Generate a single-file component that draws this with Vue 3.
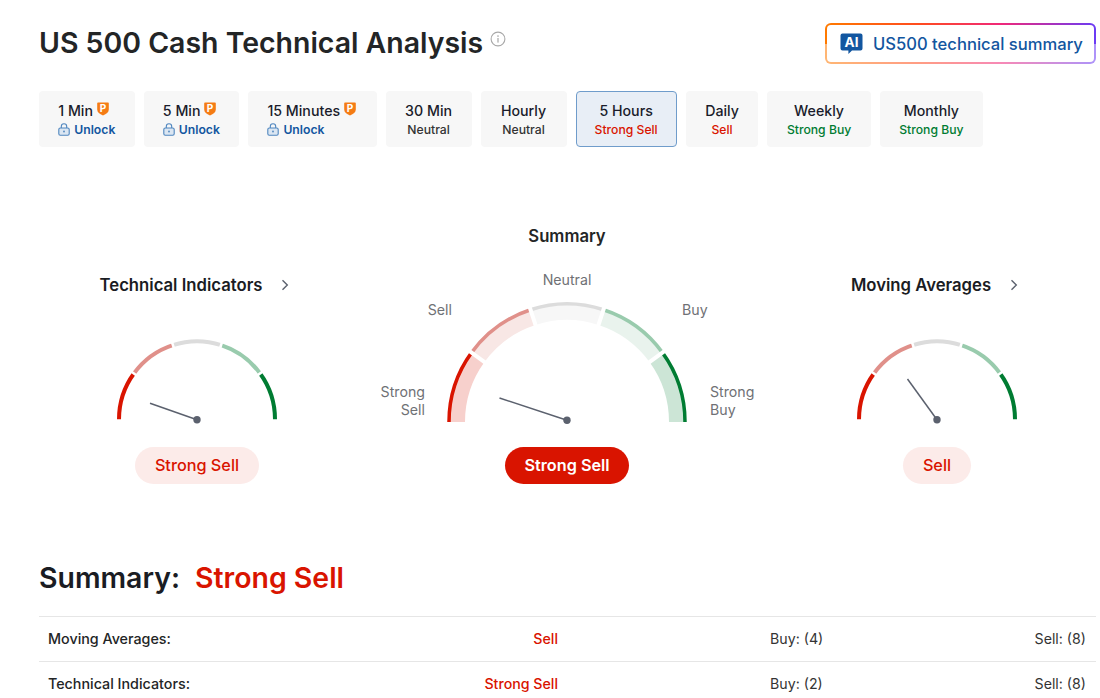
<script setup>
const tabs = [
  { label: '1 Min', locked: true },
  { label: '5 Min', locked: true },
  { label: '15 Minutes', locked: true },
  { label: '30 Min', sub: 'Neutral', tone: 'neutral' },
  { label: 'Hourly', sub: 'Neutral', tone: 'neutral' },
  { label: '5 Hours', sub: 'Strong Sell', tone: 'sell', active: true },
  { label: 'Daily', sub: 'Sell', tone: 'sell' },
  { label: 'Weekly', sub: 'Strong Buy', tone: 'buy' },
  { label: 'Monthly', sub: 'Strong Buy', tone: 'buy' }
]

const strong = ['#d91400', '#e0908a', '#dcdcdc', '#99cbad', '#007c32']
const light = ['#f7d0cc', '#f8e7e5', '#f7f7f7', '#e9f3ed', '#cce5d6']

function pt(cx, cy, r, deg) {
  const a = (deg * Math.PI) / 180
  return [cx - r * Math.cos(a), cy - r * Math.sin(a)]
}
function arc(cx, cy, r, from, to) {
  const [x1, y1] = pt(cx, cy, r, from)
  const [x2, y2] = pt(cx, cy, r, to)
  return `M${x1.toFixed(2)} ${y1.toFixed(2)}A${r} ${r} 0 0 1 ${x2.toFixed(2)} ${y2.toFixed(2)}`
}
const seps = [36, 72, 108, 144]
function radial(cx, cy, r0, r1, deg) {
  const [x1, y1] = pt(cx, cy, r0, deg)
  const [x2, y2] = pt(cx, cy, r1, deg)
  return { x1, y1, x2, y2 }
}
const segIdx = [0, 1, 2, 3, 4]

// small gauge: viewBox 170x90, centre at (85, 84.3)
const smallArcs = segIdx.map((i) => arc(85, 84.3, 78, i * 36, (i + 1) * 36))
const smallSeps = seps.map((d) => radial(85, 84.3, 70, 86, d))
const gaugeTech = { x: 38, y: 68.3 }
const gaugeMa = { x: 55.5, y: 44 }

// big gauge: viewBox 424x156, centre at (212, 152)
const bigOuter = segIdx.map((i) => arc(212, 152, 118, i * 36, (i + 1) * 36))
const bigBand = segIdx.map((i) => arc(212, 152, 110, i * 36, (i + 1) * 36))
const bigSeps = seps.map((d) => radial(212, 152, 96, 126, d))

const rows = [
  { name: 'Moving Averages:', sig: 'Sell', buy: 'Buy: (4)', sell: 'Sell: (8)' },
  { name: 'Technical Indicators:', sig: 'Strong Sell', buy: 'Buy: (2)', sell: 'Sell: (8)' }
]
</script>

<template>
  <div class="page">
    <header class="head">
      <div class="title-wrap">
        <h1>US 500 Cash Technical Analysis</h1>
        <svg class="info" width="16" height="16" viewBox="0 0 16 16" fill="none">
          <circle cx="8" cy="8" r="6.9" stroke="#a8a8a8" stroke-width="1.1" />
          <rect x="7.4" y="7" width="1.2" height="4.6" fill="#a8a8a8" />
          <circle cx="8" cy="5" r="0.85" fill="#a8a8a8" />
        </svg>
      </div>
      <button class="ai">
        <svg width="23" height="22" viewBox="0 0 23 22">
          <path d="M2.5 0.5h18a2 2 0 0 1 2 2v13a2 2 0 0 1-2 2h-8.5l-3.6 3.6v-3.6h-5.900a2 2 0 0 1-2-2v-13a2 2 0 0 1 2-2z" fill="#1256a0" />
          <text x="11.5" y="14" text-anchor="middle" class="ai-text">AI</text>
        </svg>
        <span>US500 technical summary</span>
      </button>
    </header>

    <nav class="tabs">
      <div v-for="t in tabs" :key="t.label" class="tab" :class="{ active: t.active, locked: t.locked }">
        <div class="tab-label">
          {{ t.label }}
          <svg v-if="t.locked" class="pro" width="12" height="14" viewBox="0 0 12 14">
            <path d="M1 0.5h10a.8.8 0 0 1 .8.8v6.2c0 2.8-2.4 4.600-5.800 6-3.400-1.400-5.800-3.200-5.800-6v-6.200a.8.8 0 0 1 .8-.8z" fill="#f57c14" />
            <text x="6" y="9.600" text-anchor="middle" class="pro-text">P</text>
          </svg>
        </div>
        <div v-if="t.locked" class="tab-sub unlock">
          <svg width="12" height="13" viewBox="0 0 12 13" fill="none">
            <rect x="0.8" y="5" width="10.400" height="7.200" rx="1.500" fill="#dbe6f2" stroke="#4f86bf" stroke-width="1.100" />
            <path d="M3.300 5V3.400a2.700 2.700 0 0 1 5.400 0V5" stroke="#4f86bf" stroke-width="1.100" />
            <circle cx="6" cy="8.500" r="0.900" fill="#4f86bf" />
          </svg>
          Unlock
        </div>
        <div v-else class="tab-sub" :class="t.tone">{{ t.sub }}</div>
      </div>
    </nav>

    <section class="gauges">
      <div class="gauge side">
        <div class="g-title">Technical Indicators
          <svg width="8" height="12" viewBox="0 0 8 12" fill="none"><path d="M1.500 1.200 6.300 6l-4.800 4.800" stroke="#5b616e" stroke-width="1.400" /></svg>
        </div>
        <svg class="small" width="170" height="90" viewBox="0 0 170 90">
          <path v-for="(d, i) in smallArcs" :key="i" :d="d" fill="none" :stroke="strong[i]" stroke-width="4" />
          <line v-for="(s, i) in smallSeps" :key="'s' + i" v-bind="s" stroke="#fff" stroke-width="2.500" />
          <line x1="85" y1="84.800" :x2="gaugeTech.x" :y2="gaugeTech.y" stroke="#5b616e" stroke-width="1.500" />
          <circle cx="85" cy="84.800" r="3.700" fill="#5b616e" />
        </svg>
        <div class="pill soft">Strong Sell</div>
      </div>

      <div class="gauge center">
        <div class="g-title big-title">Summary</div>
        <svg class="big" width="424" height="156" viewBox="0 0 424 156">
          <path v-for="(d, i) in bigBand" :key="'b' + i" :d="d" fill="none" :stroke="light[i]" stroke-width="16" />
          <path v-for="(d, i) in bigOuter" :key="'o' + i" :d="d" fill="none" :stroke="strong[i]" stroke-width="3.500" />
          <line v-for="(s, i) in bigSeps" :key="'l' + i" v-bind="s" stroke="#fff" stroke-width="4" />
          <line x1="212" y1="150.300" x2="144.500" y2="128" stroke="#5b616e" stroke-width="1.500" />
          <circle cx="212" cy="150.300" r="3.700" fill="#5b616e" />
          <text class="lbl" x="212" y="15" text-anchor="middle">Neutral</text>
          <text class="lbl" x="97" y="45" text-anchor="end">Sell</text>
          <text class="lbl" x="327" y="45">Buy</text>
          <text class="lbl" x="70" y="127" text-anchor="end">Strong</text>
          <text class="lbl" x="70" y="145" text-anchor="end">Sell</text>
          <text class="lbl" x="355" y="127">Strong</text>
          <text class="lbl" x="355" y="145">Buy</text>
        </svg>
        <div class="pill solid">Strong Sell</div>
      </div>

      <div class="gauge side">
        <div class="g-title">Moving Averages
          <svg width="8" height="12" viewBox="0 0 8 12" fill="none"><path d="M1.500 1.200 6.300 6l-4.800 4.800" stroke="#5b616e" stroke-width="1.400" /></svg>
        </div>
        <svg class="small" width="170" height="90" viewBox="0 0 170 90">
          <path v-for="(d, i) in smallArcs" :key="i" :d="d" fill="none" :stroke="strong[i]" stroke-width="4" />
          <line v-for="(s, i) in smallSeps" :key="'s' + i" v-bind="s" stroke="#fff" stroke-width="2.500" />
          <line x1="85" y1="84.800" :x2="gaugeMa.x" :y2="gaugeMa.y" stroke="#5b616e" stroke-width="1.500" />
          <circle cx="85" cy="84.800" r="3.700" fill="#5b616e" />
        </svg>
        <div class="pill soft">Sell</div>
      </div>
    </section>

    <h2 class="sum-head">Summary:<span>Strong Sell</span></h2>

    <div class="table">
      <div v-for="r in rows" :key="r.name" class="row">
        <span class="r-name">{{ r.name }}</span>
        <span class="r-sig">{{ r.sig }}</span>
        <span class="r-buy">{{ r.buy }}</span>
        <span class="r-sell">{{ r.sell }}</span>
      </div>
    </div>
  </div>
</template>

<style>
html, body { margin: 0; background: #fff; overflow: hidden; }
</style>

<style scoped>
.page {
  width: 1100px;
  height: 698px;
  overflow: hidden;
  box-sizing: border-box;
  padding: 23px 4px 0 39px;
  font-family: Inter, "Liberation Sans", sans-serif;
  color: #1a1c23;
  background: #fff;
}
.head {
  display: flex;
  justify-content: space-between;
  align-items: flex-start;
  height: 41px;
}
.title-wrap {
  display: flex;
  align-items: flex-start;
  gap: 7px;
}
h1 {
  margin: 1px 0 0;
  font-size: 28.45px;
  line-height: 38px;
  font-weight: 600;
  color: #232526;
}
.info { margin-top: 8px; }
.ai {
  box-sizing: border-box;
  width: 271px;
  height: 41px;
  display: flex;
  align-items: center;
  gap: 10px;
  padding: 0 0 0 13px;
  border: 2px solid transparent;
  border-radius: 6px;
  background:
    linear-gradient(#fff, #fff) padding-box,
    linear-gradient(to bottom, transparent 50%, rgba(255, 255, 255, 0.45) 50%) border-box,
    linear-gradient(90deg, #ff7a00 0%, #ff4b1f 35%, #f0287a 65%, #6a3bf5 100%) border-box;
  font-family: inherit;
  font-size: 16.6px;
  font-weight: 500;
  color: #1256a0;
}
.ai svg { flex: none; }
.ai-text { font: 700 13.5px Inter, sans-serif; fill: #fff; }

.tabs {
  display: flex;
  gap: 9px;
  margin-top: 27px;
}
.tab {
  box-sizing: border-box;
  height: 56px;
  padding: 0 19.5px;
  border-radius: 4px;
  background: #f7f7f7;
  display: flex;
  flex-direction: column;
  align-items: center;
  justify-content: center;
  white-space: nowrap;
}
.tab:nth-child(5) { min-width: 86px; }
.tab.locked { align-items: flex-start; padding: 0 19.25px; }
.tab.locked:nth-child(3) { padding-right: 20.5px; }
.tab.active {
  background: #e8eef6;
  border: 1px solid #6f9ccb;
  padding: 0 18px;
}
.tab-label {
  display: flex;
  align-items: flex-start;
  gap: 4px;
  font-size: 14.2px;
  line-height: 20px;
  font-weight: 500;
  color: #1a1c2b;
}
.pro { flex: none; margin-top: 1px; }
.pro-text { font: 700 10px Inter, sans-serif; fill: #fff; }
.tab-sub {
  font-size: 12.2px;
  line-height: 17px;
  font-weight: 500;
}
.tab-sub.neutral { color: #333; }
.tab-sub.sell { color: #d91400; }
.tab-sub.buy { color: #007c32; }
.unlock {
  display: flex;
  align-items: center;
  gap: 4px;
  color: #1256a0;
  font-weight: 600;
}

.gauges {
  display: grid;
  grid-template-columns: 316px 424px 316px;
  margin-top: 76px;
}
.gauge {
  display: flex;
  flex-direction: column;
  align-items: center;
}
.side { padding-top: 48px; }
.g-title {
  height: 28px;
  line-height: 26px;
  font-size: 16.7px;
  font-weight: 600;
  color: #1a1c23;
  white-space: nowrap;
  display: flex;
  align-items: center;
  gap: 19px;
}
.g-title svg { margin-right: 5px; }
.small { margin-top: 36px; display: block; }
.big-title {
  height: 26px;
  color: #232526;
}
.big { margin-top: 21px; display: block; }
.lbl { font: 400 14.2px Inter, sans-serif; fill: #6f7175; }
.pill {
  height: 37px;
  line-height: 37px;
  border-radius: 19px;
  padding: 0 19.5px;
  font-size: 16.25px;
  font-weight: 500;
}
.side .pill { margin-top: 22px; }
.center .pill { margin-top: 21px; }
.soft { background: #fcebe9; color: #d91400; }
.solid { background: #d91400; color: #fff; font-weight: 600; }

.sum-head {
  margin: 75px 0 0;
  font-size: 28.45px;
  line-height: 38px;
  font-weight: 600;
  color: #1a1c23;
}
.sum-head span { color: #d91400; margin-left: 15px; }
.table {
  margin-top: 19px;
  border-top: 1px solid #e6e6e6;
}
.row {
  display: grid;
  box-sizing: border-box;
  grid-template-columns: 400px 110px 1fr auto;
  align-items: center;
  height: 45px;
  padding: 0 10px 1px 9px;
  border-bottom: 1px solid #e6e6e6;
  font-size: 14.2px;
  line-height: 17px;
}
.r-name { font-weight: 500; color: #232526; font-size: 14.3px; }
.r-sig { text-align: right; color: #d91400; font-weight: 500; white-space: nowrap; }
.r-buy { color: #333; margin-left: 212px; white-space: nowrap; }
.r-sell { text-align: right; color: #333; }
</style>
